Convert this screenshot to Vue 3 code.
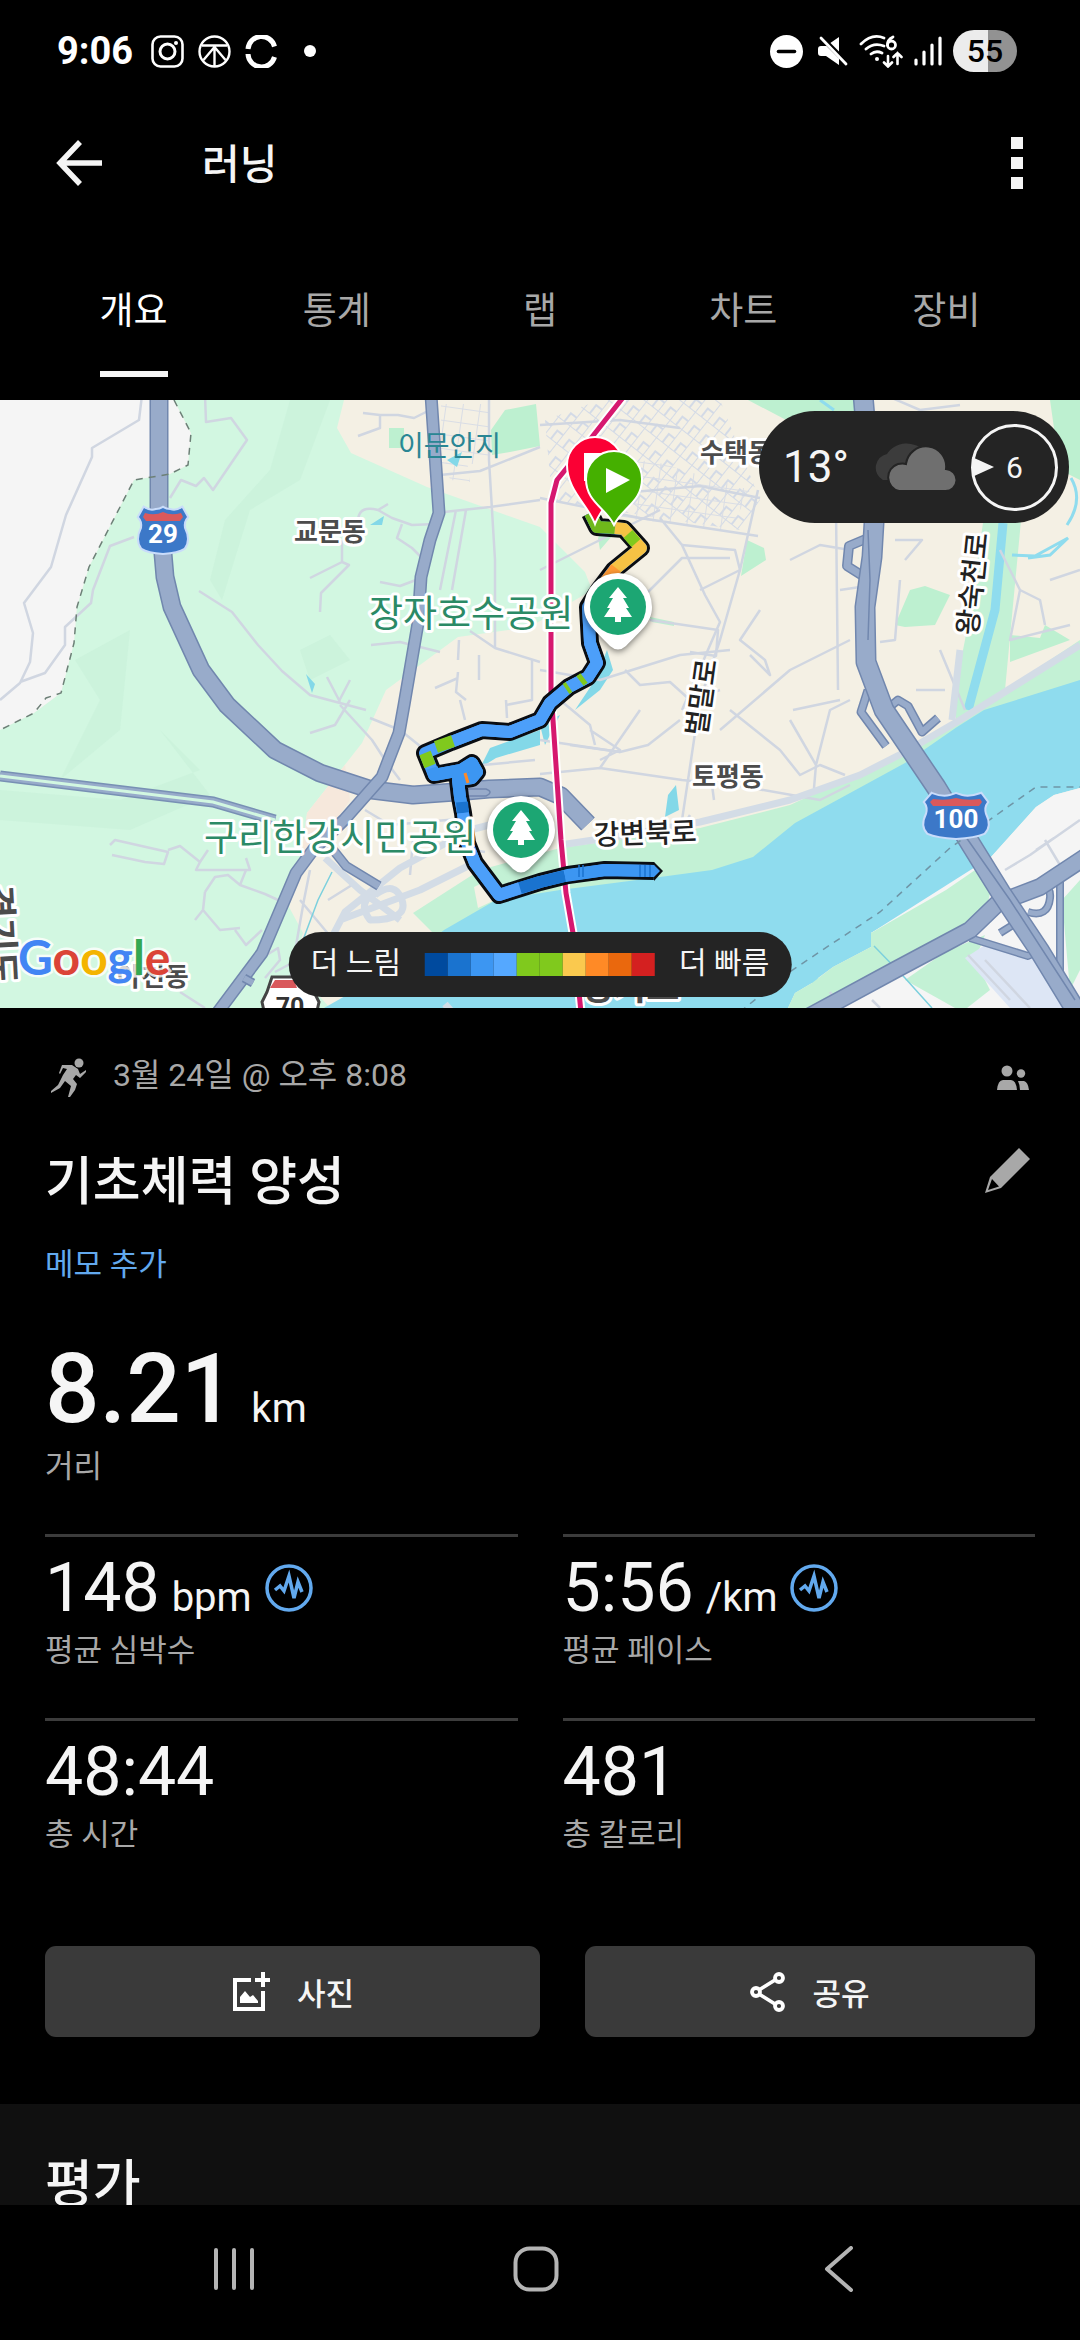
<script setup>
  import {ref} from "vue";

  const tabs = ['개요', '통계', '랩', '차트', '장비'];
  const activeTab = ref('개요');

  const stats = [
    { label: '평균 심박수', value: '148', unit: 'bpm', chart: true },
    { label: '평균 페이스', value: '5:56', unit: '/km', chart: true },
    { label: '총 시간', value: '48:44' },
    { label: '총 칼로리', value: '481' }
  ];

  const paceColors = ['#004a9e', '#1a73cf', '#3c96f2', '#55a8ff', '#80c91d', '#80c91d', '#fac94e', '#ff8a26', '#ea680d', '#d42020'];

  const highways = [
    { w: 18, d: 'M159 -5V107L165 177L172 207L201 270L227 305L275 350L320 373L372 390L413 395L455 392L489 389L540 387L561 396L588 424' },
    { w: 12, d: 'M431 -5L439 113L430 140L421 177L418 223L404 305L399 333L382 377L344 420L313 450L296 473L262 553L218 612' },
    { w: 9, d: 'M330 446L346 466L379 486' },
    { w: 8, d: 'M253 583L244 578' },
    { w: 8, d: 'M868 290L861 312L886 346M886 310L898 300L908 306L922 332L938 318' },
    { w: 9, d: 'M868 138L849 146L847 166L866 178' },
    { w: 7, d: 'M970 538L1028 556L1045 548M1060 480V575M1000 533L1024 518M1020 490Q1052 478 1050 498T1028 512' },
    { w: 17, d: 'M810 616L895 570L970 530L998 503L1040 487L1090 454' },
    { w: 20, d: 'M863 -5L874 123L872 157L865 207L866 262L884 310L936 387L970 443L1001 493L1039 550L1078 614' }
  ];

  const streets = [
    'M142 -5L139 20L92 48V57L66 115L51 167L24 203L33 233L30 262L20 283L0 300M20 282L45 273L65 245V227L91 203L93 190L110 146L134 137',
    'M205 -5L206 22L231 18L247 40L213 90L204 78L196 86L181 80L170 98',
    'M199 191L232 212L258 245L282 271L310 295L340 303L366 310M327 277L340 302M350 280L338 303',
    'M342 140V162L310 178M342 162L349 165L321 193L320 212',
    'M358 119Q360 105 378 110L392 118L412 125L435 124M402 124L397 138L412 148L424 160M378 110L388 104',
    'M363 13L380 15H398L414 18L428 11M380 15V28L358 36',
    'M489 -5V60L495 160V247M440 75L480 71L540 47M444 112L490 107L540 100M466 110L452 190M456 110L440 190',
    'M371 245L400 242L440 252M470 231L495 248L540 262M459 240L458 260M479 255V280M532 260V300L506 305',
    'M435 288L458 278M458 272L456 292L466 300M380 182L400 186L416 180',
    'M310 333L335 325L350 300M340 305L372 340L385 360L400 380M370 318L400 330L425 350M460 300L465 320M506 300L507 318',
    'M110 445L115 440L168 452L164 464L145 462L112 455M168 450L180 446L200 462L208 450M200 462L196 470H250L246 458',
    'M205 492L215 477L228 475L240 485L265 494L278 500M205 492L203 510L220 530L240 528M203 510L195 520M240 485L246 470M235 530L246 545L262 530',
    'M265 556L278 548L280 560L265 578M275 572L290 564M180 592L205 608',
    'M310 470L304 500L290 580M328 500L352 485M300 500L350 560M410 475L413 440L485 452M430 370L535 360M365 410L390 425L470 418',
    'M540 98L640 118L758 136M540 25L620 20L680 28M600 95L700 86L760 98M660 118L682 145L705 195L720 222L682 310M758 90L740 170L720 240L700 300L682 420',
    'M540 170L580 150L660 110M640 200L682 158H730M682 145L735 150L740 170L700 190M650 220L718 230L716 256L690 252',
    'M540 270L600 280L680 255L730 250M625 270L640 285L670 282L690 300L720 290M540 340L620 352L648 345L680 320M540 374L600 368L682 380L740 386L820 400L850 385',
    'M720 330L790 270L850 240M760 210L740 240L765 260L770 275L750 255M793 310L840 300M730 310L780 350L800 375L820 365L845 375',
    'M790 320L816 365L814 388M816 365L830 310L850 300M790 160L820 145L850 150M836 110L838 290M840 190L860 187M895 140H922L905 160',
    'M900 180L895 240L880 242M940 250L965 310M916 290H945M1000 150L1020 190L1010 240L1070 225M1020 190L1040 200L1045 225',
    'M590 330L620 350L600 360M560 300L590 325L595 345M570 345L620 352M640 310L600 368M690 415L684 425M712 385L714 400',
    'M885 -5L920 10L960 5M1050 180L1080 170M1005 470L1030 455L1080 420M1045 440L1060 465M1036 450L1054 438',
    'M968 555L1010 600M985 560L1030 608M830 592L840 608M872 600L880 608'
  ];

  const widerStreets = [
    'M560 445L620 436L700 422L790 400L860 375L905 352L960 320L1080 245',
    'M960 250L952 320M540 412L470 430L400 468L345 512L320 560M325 458L360 490L400 520M375 495Q395 480 402 500T370 520Q355 500 380 492M340 520L420 490L480 460',
    'M445 604L452 612'
  ];

  // one entry per stretch of equal pace
  const runColors = [
    { color: '#6fb81b', d: 'M590 113L597 127L615 128' },
    { color: '#f6c244', d: 'M615 128L624 129L641 148L614 170' },
    { color: '#80c91d', d: 'M628 134L636 143' },
    { color: '#ff9a35', d: 'M616 168L599 190' },
    { color: '#4c9ffa', d: 'M588 207L590 243L597 263L588 277L569 287L550 303L540 320L510 332L482 330L451 342' },
    { color: '#80c91d', d: 'M584 278L580 281M569 287L566 289M453 341L436 347M425 353L430 366' },
    { color: '#3c96f2', d: 'M432 368L434 375L461 370L472 363L477 372L472 378L458 380L460 397L463 413' },
    { color: '#1a73cf', d: 'M462 402L463 413' },
    { color: '#4c9ffa', d: 'M463 413L467 443L475 463L499 495L520 488' },
    { color: '#1a73cf', d: 'M520 488L540 482L565 476' },
    { color: '#3c96f2', d: 'M565 476L605 470L654 471' }
  ];
  const runPath = 'M590 113L597 127L624 129L641 148L614 170L599 190L588 207L590 243L597 263L588 277L569 287L550 303L540 320L510 332L482 330L451 342L425 353L434 375L461 370L472 363L477 372L472 378L458 380L460 397L463 413L467 443L475 463L499 495L540 482L568 475L605 470L654 471';
</script>

<template>
  <div class="app">
    <div class="status">
      <div class="status-side">
        <span class="time">9:06</span>
        <svg width="33" height="33" viewBox="0 0 33 33" fill="none" stroke="#fff" stroke-width="2.6">
          <rect x="1.5" y="1.5" width="30" height="30" rx="8" />
          <circle cx="16.5" cy="16.5" r="7.5" stroke-width="3" />
          <circle cx="25" cy="8" r="2" fill="#fff" stroke="none" />
        </svg>
        <svg width="33" height="33" viewBox="0 0 33 33" fill="none" stroke="#fff" stroke-width="2.4">
          <circle cx="16.5" cy="16.5" r="15" />
          <path d="M4 10.5H29M16.5 11V31M16.5 12L5.5 25M16.5 12L27.5 25" />
        </svg>
        <svg width="33" height="33" viewBox="0 0 33 33" fill="none" stroke="#fff" stroke-width="5">
          <path d="M3 14A13.5 13.5 0 0 1 29.5 11.5M3 19A13.5 13.5 0 0 0 29.5 22" />
        </svg>
        <i class="dot"></i>
      </div>
      <div class="status-side right">
        <svg class="quiet" width="33" height="33" viewBox="0 0 33 33">
          <circle cx="16.5" cy="16.5" r="16.5" fill="#fff" />
          <path d="M8.5 16.5H24.5" stroke="#000" stroke-width="3.6" stroke-linecap="round" />
        </svg>
        <svg width="30" height="30" viewBox="0 0 30 30" fill="#fff">
          <path d="M0 13Q0 10 3 10H8L21 1V29L8 20H3Q0 20 0 17Z" />
          <path d="M0 -2L30 28" stroke="#000" stroke-width="5" />
          <path d="M3 2L28 28" stroke="#fff" stroke-width="2.8" stroke-linecap="round" />
        </svg>
        <svg width="44" height="34" viewBox="0 0 44 34" fill="none" stroke="#fff" stroke-width="2.8" stroke-linecap="round">
          <path d="M2 10Q13 -1 25 4M7 15Q15 8 25 12M12 20Q17 16 23 19" />
          <circle cx="18" cy="25" r="2" fill="#fff" stroke="none" />
          <path d="M34 3Q28 6 28.5 11" />
          <circle cx="32.5" cy="11" r="4" />
          <path d="M29 22V32M25 28.5L29 32.5L33 28.5M38.500 30V19M34.500 23L38.500 19L42.500 23" stroke-width="2.6" />
        </svg>
        <svg width="28" height="30" viewBox="0 0 28 30" stroke="#fff" stroke-width="3.2" stroke-linecap="round">
          <path d="M2 24V28M10 16V28M18 9V28M26 2V28" />
        </svg>
        <span class="battery">55</span>
      </div>
    </div>

    <header>
      <button class="icon-button" aria-label="뒤로">
        <svg width="46" height="46" viewBox="0 0 46 46" fill="none" stroke="#f5f5f5" stroke-width="5.5">
          <path d="M24 2L4 23L24 44M4 23H46" />
        </svg>
      </button>
      <h1>러닝</h1>
      <button class="icon-button more" aria-label="더보기"><i></i><i></i><i></i></button>
    </header>

    <nav class="tabs">
      <button v-for="tab in tabs" :key="tab" :class="{active: tab === activeTab}" @click="activeTab = tab">
        <span>{{ tab }}</span>
      </button>
    </nav>

    <main>
      <section class="map">
        <svg class="map-canvas" viewBox="0 0 1080 608" preserveAspectRatio="xMidYMid slice">
          <defs>
            <pattern id="blocks" width="22" height="15" patternUnits="userSpaceOnUse" patternTransform="rotate(-52)">
              <path d="M0 0H22M0 0V15M11 7V15M0 8H12" fill="none" stroke="#d3dae6" stroke-width="2" />
            </pattern>
            <pattern id="blocks2" width="17" height="14" patternUnits="userSpaceOnUse" patternTransform="rotate(8)">
              <path d="M0 0H17M0 0V14" fill="none" stroke="#d9dde5" stroke-width="2" />
            </pattern>
          </defs>
          <rect width="1080" height="608" fill="#f4f0e4" />
          <path d="M0 0H174L191 33L188 65L170 74L134 80L89 167L77 207L74 243L61 293L34 313L0 330Z" fill="#f5f5f5" />
          <path d="M174 0L191 33L188 65L170 74L134 80L89 167L77 207L74 243L61 293L34 313L0 330V608H330L293 567L303 533L289 507L300 467L307 413L362 343L386 290L458 237L530 227L592 190L585 172L540 127L427 87L351 53L337 28L344 0Z" fill="#d2f7e1" />
          <path d="M290 0H330L300 80L250 110L222 200L210 180L225 120L270 70ZM75 260L130 230L120 330L60 380L100 300ZM300 250L330 235L350 260L310 280ZM160 330L200 370L120 400L0 390V420L130 430L210 395Z" fill="#c9f1da" opacity=".7" />
          <path d="M307 413L345 365L350 400L322 440L300 467Z" fill="#f6e8dc" />
          <path d="M389 28H404V48H389ZM491 30L505 10L536 4L540 46L510 52L492 55ZM748 0H870V30L790 22ZM747 140L764 148L766 160L741 176ZM598 138L606 122L612 136L600 150ZM1050 0H1080V80L1060 70ZM895 225L910 190L925 186L950 195L935 225L905 227ZM650 217L674 222V226L652 222ZM1010 235L1040 238L1045 225L1070 240L1010 262Z" fill="#bdf0d0" />
          <path d="M985 110H1022L1005 290L1080 240V290L957 345L955 290L965 240Z" fill="#c3f1d5" />
          <path d="M413 513L480 470L560 448L700 428L790 405L905 352L960 320L950 420L700 500L440 540Z" fill="#c3f1d5" />
          <path d="M474 487L488 480L495 500L478 508Z" fill="#f4f0e4" />

          <rect x="441" y="4" width="48" height="60" fill="url(#blocks2)" />
          <path d="M545 20L600 0H720L760 100L740 130L640 115L552 100Z" fill="url(#blocks)" />
          <path d="M585 70L650 60L750 90L730 130L620 118Z" fill="url(#blocks2)" />
          <path d="M445 60L467 60L470 82L450 80Z" fill="url(#blocks2)" />

          <path d="M1080 280L984 310L957 327L905 363L850 393L795 423L753 457L712 470L660 477L560 490L496 500L444 530L400 565L324 608H788L795 593L812 583L814 592L818 578L833 567L871 547V533L946 490L991 457L1036 407L1054 395L1080 388Z" fill="#8fdcee" />
          <path d="M991 457L1036 407L1054 395L1080 388V608H788L871 547L871 533Z" fill="#f5f5f5" />
          <path d="M788 608L795 593L812 583L833 567L871 547V533L946 490L978 468L992 485L985 515L905 555L820 608ZM905 580L945 552L985 535L975 560L990 590L967 608H955ZM1062 500L1080 480V570L1070 590Z" fill="#c3f1d5" />
          <path d="M965 558L985 545L1025 550L1080 608H1010Z" fill="#dde6f5" />
          <path d="M1003 123L995 210L968 310" fill="none" stroke="#8fdcee" stroke-width="9" />
          <path d="M1012 155L1035 156L1068 138L1050 155L1028 158M1071 78Q1084 100 1067 125M820 0L834 10" fill="none" stroke="#8fdcee" stroke-width="3" />
          <path d="M447 60L462 52L457 67ZM370 125L384 116L382 125ZM306 274L315 284L312 293ZM676 385L679 410L665 417L668 395ZM607 250L613 270L600 290L575 310L595 280ZM480 368L490 348L540 330V345L496 358ZM540 325L560 315L545 345Z" fill="#83d8e8" />

          <g fill="none" stroke="#d0d6e1" stroke-width="2.5" stroke-linejoin="round">
            <path v-for="street in streets" :key="street" :d="street" />
          </g>
          <g fill="none" stroke="#d3dce6" stroke-width="7" stroke-linejoin="round">
            <path v-for="street in widerStreets" :key="street" :d="street" />
          </g>
          <path d="M874 546L905 578L932 608M332 472L318 500L303 540" fill="none" stroke="#7cd0dd" stroke-width="1.5" />

          <path d="M0 376L213 402L275 420" fill="none" stroke="#7890b4" stroke-width="11" />
          <path d="M0 376L213 402L275 420" fill="none" stroke="#97abca" stroke-width="8" />
          <path d="M0 376L213 402L275 420" fill="none" stroke="#d2f7e1" stroke-width="3" />
          <g v-for="road in highways" :key="road.d" fill="none" stroke-linejoin="round">
            <path :d="road.d" stroke="#7187ae" :stroke-width="road.w + 1" />
            <path :d="road.d" stroke="#98abca" :stroke-width="road.w - 2" />
          </g>
          <path d="M868 130L870 180L868 240M940 400L1010 500L1075 600M455 389H486Q494 392 486 396H462" fill="none" stroke="#7187ae" stroke-width="1.5" />

          <path d="M174 0L191 33L188 65L170 74L134 80L89 167L77 207L74 243L61 293L46 298L34 313L0 330" fill="none" stroke="#6d8077" stroke-width="1.5" stroke-dasharray="7 6" />
          <path d="M740 612L785 575L830 545L880 512L950 448L1036 387H1080" fill="none" stroke="#6f95a6" stroke-width="1.5" stroke-dasharray="7 6" />

          <path d="M625 -5L592 37L557 80L551 103V290L553 320L561 440L566 493L573 533L581 612" fill="none" stroke="#fff" stroke-width="9" stroke-linejoin="round" />
          <path d="M625 -5L592 37L557 80L551 103V290L553 320L561 440L566 493L573 533L581 612" fill="none" stroke="#d6186f" stroke-width="5" stroke-linejoin="round" />

          <path :d="runPath" fill="none" stroke="#0a0d12" stroke-width="18" stroke-linejoin="round" />
          <path d="M654 462L663 471L654 481Z" fill="#0a0d12" />
          <g fill="none" stroke-width="12" stroke-linejoin="round">
            <path :d="runPath" stroke="#4c9ffa" />
            <path v-for="part in runColors" :key="part.d" :d="part.d" :stroke="part.color" />
          </g>
          <path d="M654 465L660 471L654 477Z" fill="#3c96f2" />
          <path d="M465 373L468 383" stroke="#ff8a26" stroke-width="3" />
          <path d="M579 465V477M583 465V477M640 465V477M645 465V477M650 465V477" stroke="#1a73cf" stroke-width="1.5" />

          <g class="place area">
            <text x="294" y="141">교문동</text>
            <text x="700" y="62">수택동</text>
            <text x="692" y="386">토평동</text>
            <text x="117" y="586">아천동</text>
          </g>
          <g class="place road">
            <text transform="translate(594 445) rotate(-2)">강변북로</text>
            <text transform="translate(706 337) rotate(-82)">벌말로</text>
            <text transform="translate(977 236) rotate(-84)">왕숙천로</text>
          </g>
          <g class="place province">
            <text transform="translate(-15 486) rotate(87)">경기도</text>
            <text x="580" y="600">경기도</text>
          </g>
          <g class="place park">
            <text x="369" y="227">장자호수공원</text>
            <text x="204" y="451">구리한강시민공원</text>
          </g>
          <text class="place lake" x="398" y="56">이문안지</text>

          <g class="shield">
            <path d="M144 108Q150 112 156 110Q160 110 163 108Q166 110 170 110Q176 112 182 108L187 117Q183 121 184 128Q190 140 184 148Q178 152 163 153Q148 152 142 148Q136 140 142 128Q143 121 139 117Z" />
            <path class="shield-top" d="M145 113Q155 116 163 112Q171 116 181 113L183 117L180 121H146L143 117Z" />
            <text x="163" y="143">29</text>
            <path d="M932 394Q942 398 950 396L956 394L962 396Q970 398 981 394L987 402Q983 407 985 414Q991 426 984 433Q975 437 956 438Q937 437 928 433Q921 426 927 414Q929 407 925 402Z" />
            <path class="shield-top" d="M933 399Q946 401 956 398Q966 401 980 399L982 402L979 406H933L930 402Z" />
            <text x="956" y="428">100</text>
          </g>
          <path d="M272 577H309L314 592L319 602L315 620H266L262 602L267 592Z" fill="#fff" stroke="#444" stroke-width="3" />
          <path d="M275 580H294L297 588H270Z" fill="#d9595c" />
          <text x="290" y="616" font-size="25" font-weight="700" text-anchor="middle" fill="#333">70</text>

          <g stroke="#fff" stroke-width="2">
            <path d="M595 124C588 105 567 90 567 65A28 28 0 0 1 623 65C623 90 602 105 595 124Z" fill="#fb0034" />
            <path d="M585 54H606V72H590V80H585Z" fill="#fff" />
            <path d="M614 125C606 108 586 102 586 79A28 28 0 0 1 642 79C642 102 622 108 614 125Z" fill="#45b000" />
            <path d="M606 68L630 80L606 93Z" fill="#fff" stroke="none" />
          </g>
          <g v-for="pin in [[618, 207], [521, 430]]" :key="pin[0]" :transform="`translate(${pin[0]} ${pin[1]})`">
            <path class="pin-body" d="M-34 0A34 34 0 0 1 34 0C34 16 22 24 8 39Q0 46 -8 39C-22 24 -34 16 -34 0Z" fill="#fff" />
            <circle r="28" fill="#1ca673" />
            <path d="M0 -20L9 -9H5L11 1H8L14 10H3V15H-3V10H-14L-8 1H-11L-5 -9H-9Z" fill="#fff" />
          </g>

          <text class="google" x="18" y="575"><tspan fill="#4285f4">G</tspan><tspan fill="#db4437">o</tspan><tspan fill="#f4b400">o</tspan><tspan fill="#4285f4">g</tspan><tspan fill="#34a853">l</tspan><tspan fill="#db4437">e</tspan></text>
        </svg>

        <div class="weather">
          <span class="temp">13°</span>
          <svg width="88" height="50" viewBox="0 0 88 50">
            <path d="M14 38A14 14 0 0 1 18 12A22 19 0 0 1 56 10L40 38Z" fill="#3c3c3c" />
            <path d="M30 49A14 14 0 0 1 29 22Q34 21 37 22A20 20 0 0 1 77 27A11 11 0 0 1 76 49Z" fill="#6f6f6f" stroke="#242424" stroke-width="2" />
          </svg>
          <span class="wind">6</span>
        </div>

        <div class="legend">
          <span>더 느림</span>
          <div class="scale">
            <i v-for="(color, index) in paceColors" :key="index" :style="{backgroundColor: color}"></i>
          </div>
          <span>더 빠름</span>
        </div>
      </section>

      <section class="details">
        <div class="row meta">
          <svg width="48" height="40" viewBox="0 0 48 40" fill="#a8a8a8">
            <circle cx="34" cy="6" r="4.5" />
            <path d="M17 8L27 8L33 12L35 17L41 13L41 15L35 21L31 18L28 22L32 27L30 33L25 40H23L26 29L20 24L15 31L6 36L6 34L13 28L18 18L22 12L18 11L15 17L14 16Z" />
          </svg>
          <span>3월 24일 @ 오후 8:08</span>
          <svg class="people" width="32" height="25" viewBox="0 0 32 25" fill="#a8a8a8">
            <circle cx="10" cy="6" r="5.5" />
            <circle cx="24" cy="8.5" r="4.2" />
            <path d="M0 25Q1 15 6 15H14Q19 15 20 25ZM21 16H27Q31 17 32 25H23Q23 20 21 16Z" />
          </svg>
        </div>
        <div class="row title">
          <h2>기초체력 양성</h2>
          <button class="icon-button edit" aria-label="편집">
            <svg width="48" height="48" viewBox="0 0 48 48">
              <path d="M36 1L47 12L18 41L2 46L7 30Z" fill="#a8a8a8" />
              <path d="M9 32L16 39.5L5 43Z" fill="#000" />
            </svg>
          </button>
        </div>
        <a href="#" class="memo">메모 추가</a>

        <div class="distance">
          <p class="value">8.21<span class="unit">km</span></p>
          <p class="label">거리</p>
        </div>

        <div class="stats">
          <div v-for="stat in stats" :key="stat.label" class="stat">
            <p class="value">
              {{ stat.value }}<span v-if="stat.unit" class="unit">{{ stat.unit }}</span>
              <svg v-if="stat.chart" width="48" height="48" viewBox="0 0 48 48" fill="none" stroke="#62a9ee" stroke-width="3.5">
                <circle cx="24" cy="24" r="22" />
                <path d="M10 26L15 22L19 27L24 12L29 34L33 18L37 28" />
              </svg>
            </p>
            <p class="label">{{ stat.label }}</p>
          </div>
        </div>

        <div class="actions">
          <button class="photo">
            <svg width="40" height="40" viewBox="0 0 40 40" fill="none" stroke="#fff" stroke-width="4">
              <path d="M20 8H4V37H32V19M32 0V15M24 8H39" />
              <path d="M9 31V25L14 19L19 25L22 23L27 29V31Z" fill="#fff" stroke="none" />
            </svg>
            사진
          </button>
          <button class="share">
            <svg width="36" height="40" viewBox="0 0 36 40" fill="none" stroke="#fff" stroke-width="3.8">
              <path d="M9 18L25 8M9 22L25 32" />
              <circle cx="6" cy="20" r="4" />
              <circle cx="29" cy="6" r="4" />
              <circle cx="29" cy="34" r="4" />
            </svg>
            공유
          </button>
        </div>
      </section>

      <section class="rating">
        <h2>평가</h2>
      </section>
    </main>

    <nav class="system">
      <button aria-label="최근 앱">
        <svg width="46" height="46" viewBox="0 0 46 46" stroke="#b4b4b4" stroke-width="4" stroke-linecap="round">
          <path d="M5 4V42M23 4V42M41 4V42" />
        </svg>
      </button>
      <button aria-label="홈">
        <svg width="46" height="46" viewBox="0 0 46 46" fill="none" stroke="#b4b4b4" stroke-width="4">
          <rect x="2.5" y="2.5" width="41" height="41" rx="14" />
        </svg>
      </button>
      <button aria-label="뒤로 가기">
        <svg width="46" height="46" viewBox="0 0 46 46" fill="none" stroke="#b4b4b4" stroke-width="4" stroke-linecap="round" stroke-linejoin="round">
          <path d="M35 2L11 23L35 44" />
        </svg>
      </button>
    </nav>
  </div>
</template>

<style>
  body {
    margin: 0;
    background-color: black;
  }
</style>

<style scoped>
  .app {
    height: 100vh;
    display: flex;
    flex-direction: column;
    background-color: black;
    color: #f5f5f5;
    font-family: Roboto, "Noto Sans CJK KR", sans-serif;
  }
  h1, h2, p {
    margin: 0;
  }
  svg {
    display: block;
    flex-shrink: 0;
  }
  button {
    padding: 0;
    border: none;
    background: none;
    color: inherit;
    font: inherit;
    cursor: pointer;
  }
  .status {
    height: 102px;
    flex-shrink: 0;
    display: flex;
    justify-content: space-between;
    align-items: center;
    padding: 0 63px 0 57px;
    box-sizing: border-box;
  }
  .status-side {
    display: flex;
    align-items: center;
    gap: 14px;
  }
  .status-side.right {
    gap: 11px;
  }
  .time {
    margin-right: 4px;
    font-size: 38px;
    font-weight: 700;
    color: white;
  }
  .dot {
    width: 12px;
    height: 12px;
    margin-left: 12px;
    border-radius: 50%;
    background-color: white;
  }
  .quiet {
    margin-right: 4px;
  }
  .battery {
    width: 64px;
    height: 42px;
    border-radius: 21px;
    background: linear-gradient(to right, #ececec 55%, #929292 55%);
    color: black;
    font-size: 32px;
    font-weight: 500;
    line-height: 42px;
    text-align: center;
  }
  header {
    height: 122px;
    flex-shrink: 0;
    display: flex;
    align-items: center;
    padding: 0 45px 0 56px;
  }
  h1 {
    flex: 1;
    margin-left: 100px;
    padding-top: 4px;
    font-size: 41px;
    font-weight: 500;
    line-height: 48px;
  }
  .icon-button.more {
    width: 36px;
    display: flex;
    flex-direction: column;
    align-items: center;
    gap: 8px;
  }
  .more i {
    width: 12px;
    height: 12px;
    background-color: #f5f5f5;
  }
  .tabs {
    height: 176px;
    flex-shrink: 0;
    display: grid;
    grid-template-columns: repeat(5, 1fr);
    padding: 0 32px;
  }
  .tabs button {
    display: flex;
    justify-content: center;
    padding-top: 64px;
    font-size: 37px;
    line-height: 48px;
    color: #a8a8a8;
  }
  .tabs span {
    height: 83px;
    border-bottom: 6px solid transparent;
  }
  .tabs .active {
    color: white;
  }
  .tabs .active span {
    border-color: #f5f5f5;
  }
  main {
    flex: 1;
    min-height: 0;
    overflow-y: auto;
    scrollbar-width: none;
  }
  .map {
    position: relative;
    aspect-ratio: 135 / 76;
    overflow: hidden;
  }
  .map-canvas {
    width: 100%;
    height: 100%;
  }
  .place {
    fill: #4c4c4c;
    stroke: white;
    stroke-width: 6px;
    stroke-linejoin: round;
    paint-order: stroke;
    font-size: 28px;
  }
  .area {
    font-size: 26px;
    font-weight: 700;
  }
  .road {
    fill: #222222;
    font-weight: 500;
  }
  .province {
    font-size: 36px;
    font-weight: 700;
  }
  .park {
    fill: #2b8a66;
    font-size: 37px;
  }
  .lake {
    fill: #2a8694;
    stroke: none;
  }
  .shield {
    fill: #3c78c8;
    stroke: #c9dcfa;
    stroke-width: 4px;
    paint-order: stroke;
    font-size: 26px;
    font-weight: 700;
    text-anchor: middle;
  }
  .shield-top {
    fill: #d9595c;
    stroke: none;
  }
  .shield text {
    fill: white;
    stroke: none;
  }
  .pin-body {
    filter: drop-shadow(0 2px 3px rgba(0,0,0,.5));
  }
  .google {
    font-family: Lato, sans-serif;
    font-size: 48px;
    font-weight: 700;
    stroke: rgba(255,255,255,.8);
    stroke-width: 5px;
    paint-order: stroke;
  }
  .weather {
    position: absolute;
    top: 11px;
    right: 11px;
    height: 112px;
    display: flex;
    align-items: center;
    padding: 0 11px 0 24px;
    border-radius: 56px;
    background-color: #242424;
  }
  .temp {
    margin-right: 20px;
    font-size: 44px;
  }
  .wind {
    position: relative;
    width: 81px;
    height: 81px;
    margin-left: 14px;
    border: 3px solid #f5f5f5;
    border-radius: 50%;
    font-size: 30px;
    line-height: 81px;
    text-align: center;
  }
  .wind::before {
    content: "";
    position: absolute;
    left: -2px;
    top: 30px;
    border-left: 22px solid #f5f5f5;
    border-top: 10px solid transparent;
    border-bottom: 10px solid transparent;
  }
  .legend {
    position: absolute;
    bottom: 11px;
    left: 50%;
    transform: translateX(-50%);
    height: 65px;
    display: flex;
    align-items: center;
    gap: 24px;
    padding: 0 22px;
    border-radius: 33px;
    background-color: #242424;
    font-size: 30px;
    line-height: 40px;
    white-space: nowrap;
  }
  .legend span {
    padding-bottom: 4px;
  }
  .scale {
    display: flex;
  }
  .scale i {
    width: 23px;
    height: 23px;
  }
  .details {
    padding: 45px 45px 67px;
  }
  .row {
    display: flex;
    align-items: center;
  }
  .meta {
    height: 48px;
    gap: 20px;
    font-size: 32px;
    line-height: 40px;
    color: #a8a8a8;
  }
  .meta span {
    padding-bottom: 4px;
  }
  .people {
    margin: 0 6px 0 auto;
  }
  .title {
    justify-content: space-between;
    margin: 46px 0 22px;
  }
  h2 {
    font-size: 52px;
    font-weight: 500;
    line-height: 72px;
  }
  .edit {
    align-self: flex-start;
    margin-right: 4px;
  }
  .memo {
    display: block;
    font-size: 31px;
    line-height: 48px;
    color: #62a9ee;
    text-decoration: none;
  }
  .distance {
    padding: 52px 0 47px;
  }
  .value {
    display: flex;
    align-items: baseline;
    font-size: 68px;
    line-height: 72px;
  }
  .distance .value {
    font-size: 96px;
    font-weight: 500;
    line-height: 96px;
    margin-bottom: 10px;
  }
  .unit {
    margin-left: 12px;
    font-size: 40px;
    font-weight: 400;
    line-height: 40px;
  }
  .distance .unit {
    margin-left: 16px;
  }
  .value svg {
    align-self: center;
    margin-left: 13px;
  }
  .label {
    margin-top: 7px;
    font-size: 31px;
    line-height: 40px;
    color: #a8a8a8;
  }
  .distance .label {
    margin-top: 0;
  }
  .stats {
    display: grid;
    grid-template-columns: 1fr 1fr;
    column-gap: 45px;
  }
  .stat {
    padding: 15px 0 47px;
    border-top: 3px solid #3c3c3c;
  }
  .actions {
    display: flex;
    gap: 45px;
    margin-top: 44px;
  }
  .actions button {
    height: 91px;
    display: flex;
    align-items: center;
    justify-content: center;
    gap: 26px;
    border-radius: 11px;
    background-color: #3a3a3a;
    font-size: 31px;
    font-weight: 500;
  }
  .photo {
    flex: 11;
  }
  .share {
    flex: 10;
  }
  .rating {
    padding: 46px 45px;
    background-color: #101010;
  }
  .system {
    height: 128px;
    flex-shrink: 0;
    display: grid;
    grid-template-columns: repeat(3, 1fr);
    padding: 0 90px 7px 83px;
  }
  .system button {
    display: flex;
    align-items: center;
    justify-content: center;
  }
</style>
